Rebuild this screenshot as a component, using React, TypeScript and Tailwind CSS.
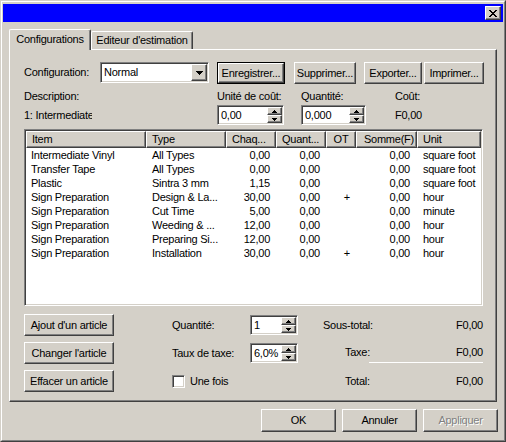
import React from 'react';

// classic 3D edges
const raised =
  'border border-t-white border-l-white border-r-[#404040] border-b-[#404040] shadow-[inset_-1px_-1px_0_#808080]';
const sunken =
  'border border-t-[#808080] border-l-[#808080] border-r-white border-b-white shadow-[inset_1px_1px_0_#404040,inset_-1px_-1px_0_#d4d0c8]';

const headerCols = [
  { label: 'Item', cls: 'w-[120px] justify-start pl-[5px]' },
  { label: 'Type', cls: 'w-[80px] justify-start pl-[5px]' },
  { label: 'Chaq...', cls: 'w-[50px] justify-start pl-[5px]' },
  { label: 'Quant...', cls: 'w-[50px] justify-start pl-[5px]' },
  { label: 'OT', cls: 'w-[30px] justify-center' },
  { label: 'Somme(F)', cls: 'w-[61px] justify-start pl-[7px]' },
  { label: 'Unit', cls: 'w-[64px] justify-start pl-[5px]' },
];

const rowCols = [
  'w-[120px] pl-[5px] text-left',
  'w-[80px] pl-[6px] text-left',
  'w-[50px] pr-[6px] text-right',
  'w-[50px] pr-[6px] text-right',
  'w-[30px] pr-[6px] text-right',
  'w-[61px] pr-[7px] text-right',
  'w-[64px] pl-[6px] text-left',
];

const rows = [
  ['Intermediate Vinyl', 'All Types', '0,00', '0,00', '', '0,00', 'square foot'],
  ['Transfer Tape', 'All Types', '0,00', '0,00', '', '0,00', 'square foot'],
  ['Plastic', 'Sintra 3 mm', '1,15', '0,00', '', '0,00', 'square foot'],
  ['Sign Preparation', 'Design & La...', '30,00', '0,00', '+', '0,00', 'hour'],
  ['Sign Preparation', 'Cut Time', '5,00', '0,00', '', '0,00', 'minute'],
  ['Sign Preparation', 'Weeding & ...', '12,00', '0,00', '', '0,00', 'hour'],
  ['Sign Preparation', 'Preparing Si...', '12,00', '0,00', '', '0,00', 'hour'],
  ['Sign Preparation', 'Installation', '30,00', '0,00', '+', '0,00', 'hour'],
];

const Arrow = ({ up = false }: { up?: boolean }) => (
  <svg width="5" height="3" viewBox="0 0 5 3" shapeRendering="crispEdges">
    <path
      fill="#000"
      d={up ? 'M2 0h1v1H2zM1 1h3v1H1zM0 2h5v1H0z' : 'M0 0h5v1H0zM1 1h3v1H1zM2 2h1v1H2z'}
    />
  </svg>
);

const Btn = ({
  label,
  className = '',
  isDefault = false,
  disabled = false,
}: {
  label: string;
  className?: string;
  isDefault?: boolean;
  disabled?: boolean;
}) => {
  const face = (
    <div
      className={`flex h-full w-full items-center justify-center bg-[#d4d0c8] ${raised} ${
        disabled ? 'text-[#808080] [text-shadow:1px_1px_0_#ffffff]' : ''
      }`}
    >
      {label}
    </div>
  );
  if (isDefault) return <div className={`shrink-0 border border-black ${className}`}>{face}</div>;
  return <div className={`shrink-0 ${className}`}>{face}</div>;
};

const Spin = ({ value, className = '' }: { value: string; className?: string }) => (
  <div className={`flex shrink-0 bg-white p-px ${sunken} ${className}`}>
    <span className="flex flex-1 items-center pl-[2px]">{value}</span>
    <div className="flex w-[15px] flex-col">
      <div className={`flex flex-1 items-center justify-center bg-[#d4d0c8] ${raised}`}>
        <Arrow up />
      </div>
      <div className={`flex flex-1 items-center justify-center bg-[#d4d0c8] ${raised}`}>
        <Arrow />
      </div>
    </div>
  </div>
);

const CloseGlyph = () => (
  <svg width="8" height="7" viewBox="0 0 8 7" shapeRendering="crispEdges">
    <path
      fill="#000"
      d="M0 0h2v1H0zM6 0h2v1H6zM1 1h2v1H1zM5 1h2v1H5zM2 2h4v1H2zM3 3h2v1H3zM2 4h4v1H2zM1 5h2v1H1zM5 5h2v1H5zM0 6h2v1H0zM6 6h2v1H6z"
    />
  </svg>
);

export default function App() {
  return (
    <div className="h-[442px] w-[506px] border border-t-[#d4d0c8] border-l-[#d4d0c8] border-r-[#404040] border-b-[#404040] bg-[#d4d0c8] font-['Liberation_Sans',Arial,sans-serif] text-[11px] leading-none tracking-[-0.25px] text-black">
      <div className="flex h-full flex-col border border-t-white border-l-white border-r-[#808080] border-b-[#808080] px-px pt-[2px]">
        {/* title bar */}
        <div className="flex h-[18px] shrink-0 items-center justify-end bg-[#0000ff] pr-[2px]">
          <div className={`flex h-[14px] w-[16px] items-center justify-center bg-[#d4d0c8] ${raised}`}>
            <CloseGlyph />
          </div>
        </div>

        {/* tabs */}
        <div className="ml-[6px] mt-[7px] flex h-[20px] items-end">
          <div className="relative z-10 -mb-px flex h-[21px] w-[82px] items-center justify-center rounded-t-[2px] border border-b-0 border-t-white border-l-white border-r-[#404040] bg-[#d4d0c8] pb-[2px] shadow-[inset_-1px_0_0_#808080]">
            Configurations
          </div>
          <div className="flex h-[18px] w-[102px] items-center justify-center rounded-t-[2px] border border-b-0 border-t-white border-l-white border-r-[#404040] shadow-[inset_-1px_0_0_#808080]">
            Editeur d'estimation
          </div>
        </div>

        {/* panel */}
        <div className={`ml-[6px] h-[353px] w-[488px] shrink-0 pl-[14px] ${raised}`}>
          <div className="mt-[12px] flex h-[22px] items-start">
            <span className="flex h-[21px] w-[76px] items-center">Configuration:</span>
            <div className={`flex h-[21px] w-[109px] bg-white p-px ${sunken}`}>
              <span className="flex flex-1 items-center pl-[2px]">Normal</span>
              <div className={`flex w-[16px] items-center justify-center bg-[#d4d0c8] ${raised}`}>
                <svg width="7" height="4" viewBox="0 0 7 4" shapeRendering="crispEdges">
                  <path fill="#000" d="M0 0h7v1H0zM1 1h5v1H1zM2 2h3v1H2zM3 3h1v1H3z" />
                </svg>
              </div>
            </div>
            <Btn label="Enregistrer..." isDefault className="ml-[8px] h-[22px] w-[68px]" />
            <Btn label="Supprimer..." className="ml-[9px] h-[22px] w-[62px]" />
            <Btn label="Exporter..." className="ml-[8px] h-[22px] w-[58px]" />
            <Btn label="Imprimer..." className="ml-[2px] h-[22px] w-[60px]" />
          </div>

          <div className="mt-[5px] flex h-[14px] items-center">
            <span className="w-[193px]">Description:</span>
            <span className="w-[84px]">Unité de coût:</span>
            <span className="w-[94px]">Quantité:</span>
            <span>Coût:</span>
          </div>

          <div className="mt-[2px] flex h-[20px] items-center">
            <span className="w-[68px] overflow-hidden whitespace-nowrap">1: Intermediate</span>
            <span className="w-[125px]" />
            <Spin value="0,00" className="h-[20px] w-[67px]" />
            <Spin value="0,000" className="ml-[17px] h-[20px] w-[65px]" />
            <span className="ml-[29px]">F0,00</span>
          </div>

          {/* list view */}
          <div className={`mt-[4px] h-[177px] w-[459px] overflow-hidden bg-white p-px ${sunken}`}>
            <div className="flex h-[17px]">
              {headerCols.map((c) => (
                <div key={c.label} className={`flex shrink-0 items-center bg-[#d4d0c8] ${raised} ${c.cls}`}>
                  {c.label}
                </div>
              ))}
            </div>
            {rows.map((r, i) => (
              <div key={i} className="flex h-[14px] items-center">
                {r.map((cell, j) => (
                  <span key={j} className={`shrink-0 overflow-hidden whitespace-nowrap ${rowCols[j]}`}>
                    {cell}
                  </span>
                ))}
              </div>
            ))}
          </div>

          {/* bottom area */}
          <div className="mt-[8px] flex">
            <div className="flex flex-col gap-[6px]">
              <Btn label="Ajout d'un article" className="h-[22px] w-[90px]" />
              <Btn label="Changer l'article" className="h-[22px] w-[90px]" />
              <Btn label="Effacer un article" className="h-[22px] w-[90px]" />
            </div>

            <div className="ml-[58px] flex w-[126px] flex-col gap-[6px]">
              <div className="flex h-[22px] items-center">
                <span className="w-[78px]">Quantité:</span>
                <Spin value="1" className="h-[20px] w-[48px]" />
              </div>
              <div className="flex h-[22px] items-center">
                <span className="w-[78px]">Taux de taxe:</span>
                <Spin value="6,0%" className="h-[20px] w-[48px]" />
              </div>
              <div className="flex h-[22px] items-center">
                <div className={`h-[13px] w-[13px] bg-white ${sunken}`} />
                <span className="ml-[5px]">Une fois</span>
              </div>
            </div>

            <div className="ml-[25px] flex w-[160px] flex-col gap-[6px]">
              <div className="flex h-[22px] items-center justify-between">
                <span>Sous-total:</span>
                <span>F0,00</span>
              </div>
              <div className="flex h-[22px] flex-col">
                <div className="flex h-[20px] items-center justify-between pl-[22px]">
                  <span>Taxe:</span>
                  <span>F0,00</span>
                </div>
                <div className="ml-[46px] h-px bg-white" />
              </div>
              <div className="flex h-[22px] items-center justify-between pl-[22px]">
                <span>Total:</span>
                <span>F0,00</span>
              </div>
            </div>
          </div>
        </div>

        {/* dialog buttons */}
        <div className="mr-[5px] mt-[7px] flex justify-end gap-[6px]">
          <Btn label="OK" className="h-[23px] w-[75px]" />
          <Btn label="Annuler" className="h-[23px] w-[75px]" />
          <Btn label="Appliquer" disabled className="h-[23px] w-[75px]" />
        </div>
      </div>
    </div>
  );
}
